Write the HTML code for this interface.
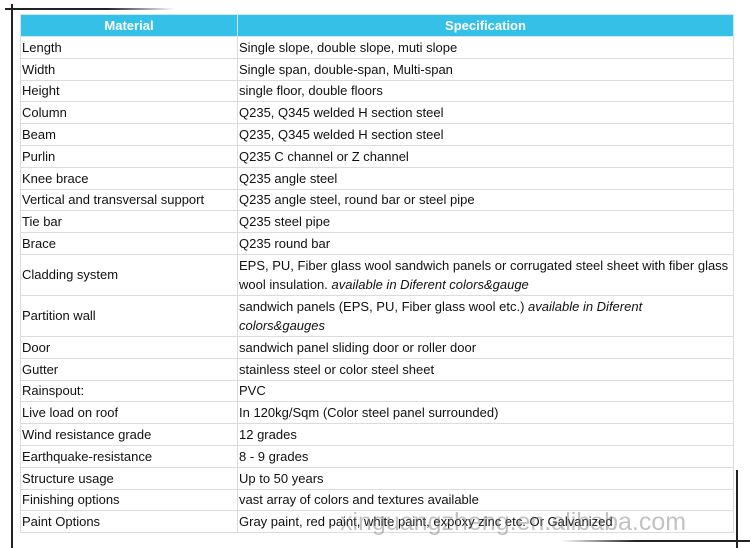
<!DOCTYPE html>
<html><head><style>
body{margin:0;width:750px;height:548px;background:#fff;position:relative;overflow:hidden;font-family:"Liberation Sans",Arial,sans-serif;}
table{position:absolute;left:20px;top:14px;width:714px;border-collapse:collapse;font-size:13px;color:#111;}
td,th{border:1px solid #d8dde2;padding:0 1px;height:20.8px;line-height:19px;text-align:left;vertical-align:middle}
th{background:#35c0e8;color:#fff;text-align:center;font-weight:bold;height:21px;border-color:#cfe9f4}
td.c1{width:214px}
.t{height:40px}
i{font-style:italic}
.wm{position:absolute;left:340px;top:508px;font-size:25px;color:rgba(120,120,120,.45);letter-spacing:0px}
</style></head><body>
<div style="position:absolute;left:11px;top:4px;width:2px;height:544px;background:#222"></div>
<div style="position:absolute;left:5px;top:8px;width:170px;height:2px;background:linear-gradient(90deg,#222,#222 60%,rgba(0,0,0,0))"></div>
<div style="position:absolute;left:736px;top:470px;width:2px;height:78px;background:#222"></div>
<div style="position:absolute;left:560px;top:540px;width:190px;height:2px;background:linear-gradient(90deg,rgba(0,0,0,0),#222 40%)"></div>
<table>
<tr><th class="c1">Material</th><th>Specification</th></tr>
<tr><td class="c1">Length</td><td>Single slope, double slope, muti slope</td></tr>
<tr><td class="c1">Width</td><td>Single span, double-span, Multi-span</td></tr>
<tr><td class="c1">Height</td><td>single floor, double floors</td></tr>
<tr><td class="c1">Column</td><td>Q235, Q345 welded H section steel</td></tr>
<tr><td class="c1">Beam</td><td>Q235, Q345 welded H section steel</td></tr>
<tr><td class="c1">Purlin</td><td>Q235 C channel or Z channel</td></tr>
<tr><td class="c1">Knee brace</td><td>Q235 angle steel</td></tr>
<tr><td class="c1">Vertical and transversal support</td><td>Q235 angle steel, round bar or steel pipe</td></tr>
<tr><td class="c1">Tie bar</td><td>Q235 steel pipe</td></tr>
<tr><td class="c1">Brace</td><td>Q235 round bar</td></tr>
<tr><td class="c1 t">Cladding system</td><td class="t">EPS, PU, Fiber glass wool sandwich panels or corrugated steel sheet with fiber glass wool insulation. <i>available in Diferent colors&amp;gauge</i></td></tr>
<tr><td class="c1 t">Partition wall</td><td class="t">sandwich panels (EPS, PU, Fiber glass wool etc.) <i>available in Diferent<br>colors&amp;gauges</i></td></tr>
<tr><td class="c1">Door</td><td>sandwich panel sliding door or roller door</td></tr>
<tr><td class="c1">Gutter</td><td>stainless steel or color steel sheet</td></tr>
<tr><td class="c1">Rainspout:</td><td>PVC</td></tr>
<tr><td class="c1">Live load on roof</td><td>In 120kg/Sqm (Color steel panel surrounded)</td></tr>
<tr><td class="c1">Wind resistance grade</td><td>12 grades</td></tr>
<tr><td class="c1">Earthquake-resistance</td><td>8 - 9 grades</td></tr>
<tr><td class="c1">Structure usage</td><td>Up to 50 years</td></tr>
<tr><td class="c1">Finishing options</td><td>vast array of colors and textures available</td></tr>
<tr><td class="c1">Paint Options</td><td>Gray paint, red paint, white paint, expoxy zinc etc. Or Galvanized</td></tr>
</table>
<div class="wm">xinguangzheng.en.alibaba.com</div>
</body></html>
